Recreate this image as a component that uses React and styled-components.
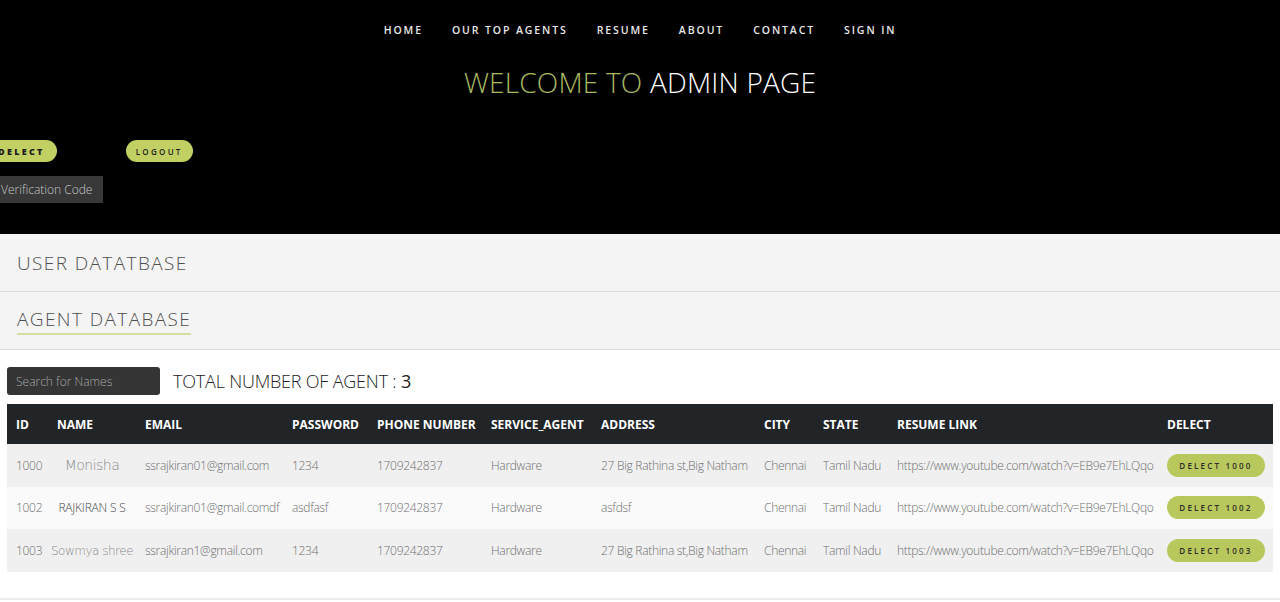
import React from "react";
import styled, { createGlobalStyle } from "styled-components";

const GlobalStyle = createGlobalStyle`
  body {
    margin: 0;
    background: #fff;
    font-family: "Open Sans", "Liberation Sans", sans-serif;
  }
`;

const Header = styled.header`
  background: #000;
  height: 234px;
  display: flex;
  flex-direction: column;
`;

const Nav = styled.nav`
  display: flex;
  justify-content: center;
  gap: 29px;
  padding-top: 23px;
`;

const NavLink = styled.a`
  color: #e8e8e8;
  font-size: 10.5px;
  font-weight: 600;
  letter-spacing: 1.9px;
  text-decoration: none;
`;

const Title = styled.h1`
  margin: 26px 0 0;
  text-align: center;
  font-weight: 300;
  font-size: 28px;
  letter-spacing: 0.2px;
  color: #fff;
`;

const Accent = styled.span`
  color: #a9b960;
`;

const ButtonRow = styled.div`
  display: flex;
  gap: 69px;
  margin-top: 39px;
`;

const PillButton = styled.button`
  background: #c2d063;
  border: none;
  border-radius: 12px;
  height: 22px;
  padding: 0 ${(p) => (p.$wide ? 12 : 10)}px;
  font-family: "Open Sans", "Liberation Sans", sans-serif;
  font-size: ${(p) => (p.$bold ? 9 : 8)}px;
  font-weight: ${(p) => (p.$bold ? 800 : 600)};
  letter-spacing: 2.3px;
  color: #1d1d1d;
  margin-left: ${(p) => p.$offset || 0}px;
`;

const CodeBox = styled.div`
  margin-top: 14px;
  width: 103px;
  height: 27px;
  background: #383838;
  color: #c8c8c8;
  font-size: 12px;
  font-weight: 300;
  display: flex;
  align-items: center;
  padding-left: 1px;
  box-sizing: border-box;
  white-space: nowrap;
`;

const Section = styled.div`
  background: #f4f4f4;
  height: 58px;
  border-bottom: 1px solid #dcdcdc;
  display: flex;
  align-items: center;
  padding-left: 17px;
  box-sizing: border-box;
`;

const SectionTitle = styled.span`
  font-size: 19px;
  font-weight: 300;
  letter-spacing: 1.4px;
  color: #4f4f4f;
  border-bottom: ${(p) => (p.$active ? "2px solid #d4e0a0" : "none")};
  padding-bottom: ${(p) => (p.$active ? "1px" : "0")};
`;

const Toolbar = styled.div`
  display: flex;
  align-items: center;
  gap: 13px;
  padding: 17px 7px 9px;
`;

const Search = styled.input`
  width: 153px;
  height: 28px;
  box-sizing: border-box;
  background: #353535;
  border: none;
  border-radius: 3px;
  padding-left: 9px;
  color: #ddd;
  font-family: "Open Sans", "Liberation Sans", sans-serif;
  font-size: 12px;
  font-weight: 300;
  &::placeholder {
    color: #a8a8a8;
  }
`;

const Total = styled.span`
  font-size: 18px;
  font-weight: 300;
  letter-spacing: -0.2px;
  color: #222;
`;

const Count = styled.span`
  font-weight: 400;
`;

const TableWrap = styled.div`
  padding: 0 7px;
`;

const Table = styled.table`
  width: 1266px;
  table-layout: fixed;
  border-collapse: collapse;
`;

const Th = styled.th`
  background: #222528;
  color: #fff;
  font-size: 12px;
  font-weight: 700;
  text-align: left;
  height: 40px;
  padding: 0 0 0 9px;
  white-space: nowrap;
`;

const Row = styled.tr`
  background: ${(p) => (p.$odd ? "#fafafa" : "#f0f0f0")};
  height: 42.5px;
`;

const Td = styled.td`
  color: #6f6f6f;
  font-size: 12px;
  font-weight: 300;
  letter-spacing: -0.3px;
  padding: 0 0 0 ${(p) => (p.$center ? 0 : 9)}px;
  text-align: ${(p) => (p.$center ? "center" : "left")};
  white-space: nowrap;
  overflow: hidden;
`;

const NameText = styled.span`
  font-family: ${(p) => (p.$thin ? '"DejaVu Sans", sans-serif' : "inherit")};
  font-size: ${(p) => (p.$big ? 14 : 12)}px;
  font-weight: ${(p) => (p.$thin ? 200 : 300)};
  color: ${(p) => (p.$thin ? "#8a8a8a" : "#4a4a4a")};
  letter-spacing: ${(p) => (p.$thin ? "-0.5px" : "-0.2px")};
`;

const RowButton = styled.button`
  background: #b9c85c;
  border: none;
  border-radius: 12px;
  width: 98px;
  height: 23px;
  font-family: "Open Sans", "Liberation Sans", sans-serif;
  font-size: 8px;
  font-weight: 600;
  letter-spacing: 2.2px;
  color: #2a2a2a;
`;

const Footer = styled.div`
  margin-top: 26px;
  border-top: 2px solid #ebebeb;
  height: 2px;
`;

const columns = [
  ["ID", 41],
  ["NAME", 88],
  ["EMAIL", 147],
  ["PASSWORD", 85],
  ["PHONE NUMBER", 114],
  ["SERVICE_AGENT", 110],
  ["ADDRESS", 163],
  ["CITY", 59],
  ["STATE", 74],
  ["RESUME LINK", 270],
  ["DELECT", 115],
];

const agents = [
  { id: 1000, name: "Monisha", style: "big", email: "ssrajkiran01@gmail.com", password: "1234", phone: "1709242837", service: "Hardware", address: "27 Big Rathina st,Big Natham" },
  { id: 1002, name: "RAJKIRAN S S", style: "", email: "ssrajkiran01@gmail.comdf", password: "asdfasf", phone: "1709242837", service: "Hardware", address: "asfdsf" },
  { id: 1003, name: "Sowmya shree", style: "thin", email: "ssrajkiran1@gmail.com", password: "1234", phone: "1709242837", service: "Hardware", address: "27 Big Rathina st,Big Natham" },
];

const navItems = ["HOME", "OUR TOP AGENTS", "RESUME", "ABOUT", "CONTACT", "SIGN IN"];

export default function App() {
  return (
    <>
      <GlobalStyle />
      <Header>
        <Nav>
          {navItems.map((item) => (
            <NavLink key={item} href="#">
              {item}
            </NavLink>
          ))}
        </Nav>
        <Title>
          <Accent>WELCOME TO</Accent> ADMIN PAGE
        </Title>
        <ButtonRow>
          <PillButton $bold $wide $offset={-14}>DELECT</PillButton>
          <PillButton>LOGOUT</PillButton>
        </ButtonRow>
        <CodeBox>Verification Code</CodeBox>
      </Header>
      <Section>
        <SectionTitle>USER DATATBASE</SectionTitle>
      </Section>
      <Section>
        <SectionTitle $active>AGENT DATABASE</SectionTitle>
      </Section>
      <Toolbar>
        <Search placeholder="Search for Names" />
        <Total>
          TOTAL NUMBER OF AGENT : <Count>3</Count>
        </Total>
      </Toolbar>
      <TableWrap>
        <Table>
          <colgroup>
            {columns.map(([label, w]) => (
              <col key={label} style={{ width: w }} />
            ))}
          </colgroup>
          <thead>
            <tr>
              {columns.map(([label]) => (
                <Th key={label}>{label}</Th>
              ))}
            </tr>
          </thead>
          <tbody>
            {agents.map((a, i) => (
              <Row key={a.id} $odd={i % 2 === 1}>
                <Td>{a.id}</Td>
                <Td $center>
                  <NameText $big={a.style === "big"} $thin={a.style === "thin" || a.style === "big"}>
                    {a.name}
                  </NameText>
                </Td>
                <Td>{a.email}</Td>
                <Td>{a.password}</Td>
                <Td>{a.phone}</Td>
                <Td>{a.service}</Td>
                <Td>{a.address}</Td>
                <Td>Chennai</Td>
                <Td>Tamil Nadu</Td>
                <Td>https://www.youtube.com/watch?v=EB9e7EhLQqo</Td>
                <Td>
                  <RowButton>DELECT {a.id}</RowButton>
                </Td>
              </Row>
            ))}
          </tbody>
        </Table>
      </TableWrap>
      <Footer />
    </>
  );
}
